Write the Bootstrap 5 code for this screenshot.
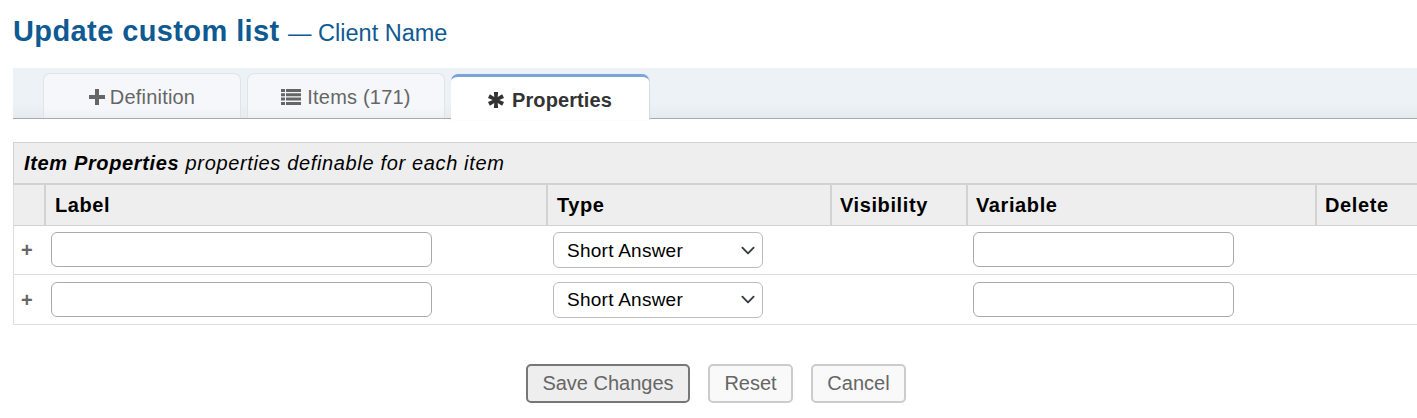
<!DOCTYPE html>
<html lang="en">
<head>
    <meta charset="UTF-8">
    <meta name="viewport" content="width=device-width, initial-scale=1.0">
    <title>Update custom list</title>
    <link href="https://cdn.jsdelivr.net/npm/bootstrap@5.3.0/dist/css/bootstrap.min.css" rel="stylesheet">
    <style>
        body {
            font-family: "Liberation Sans", Arial, sans-serif;
            background: #fff;
            overflow: hidden;
        }

        .page-wrap {
            padding: 13px 0 0 13px;
        }

        .page-title {
            font-family: "Liberation Sans", Arial, sans-serif;
            font-size: 29px;
            font-weight: 700;
            line-height: 36px;
            letter-spacing: .4px;
            color: #0f5a92;
            margin: 0 0 17px;
        }

        .page-title span {
            font-size: 23.5px;
            font-weight: 400;
            letter-spacing: 0;
        }

        .tab-bar {
            height: 51px;
            padding: 5px 0 0 30px;
            gap: 6px;
            background: linear-gradient(#edf2f7, #edf2f7 70%, #e6ebf0);
            border-bottom: 1px solid #a9a9a9;
        }

        .tab-item {
            width: 198px;
            height: 45px;
            gap: 5px;
            padding-top: 2px;
            font-size: 20px;
            letter-spacing: .2px;
            color: #666;
            background: linear-gradient(#f5f7fa, #f5f7fa 75%, #eef1f4);
            border: 1px solid #e0e4e8;
            border-bottom: 0;
            border-radius: 7px 7px 0 0;
        }

        .tab-item svg {
            fill: #666;
        }

        .tab-list {
            gap: 6px;
        }

        .tab-active {
            height: 46px;
            margin-top: 1px;
            gap: 8px;
            padding-top: 3px;
            font-weight: 700;
            letter-spacing: .1px;
            color: #333;
            background: #fff;
            border: 0;
            border-top: 3px solid #7ba4d8;
            box-shadow: 1px 0 1px #d5dae0;
            margin-bottom: -1px;
        }

        .tab-active svg {
            fill: #333;
        }

        .props-table {
            width: 100%;
            margin-top: 23px;
            table-layout: fixed;
            border-collapse: separate;
            border-spacing: 0;
            border-left: 1px solid #ddd;
            color: #000;
        }

        .props-table caption {
            caption-side: top;
            height: 43px;
            padding: 0 0 0 10px;
            font-size: 20px;
            line-height: 40px;
            font-style: italic;
            letter-spacing: .65px;
            color: #000;
            background: #eee;
            border: solid #d2d2d2;
            border-width: 1px 0 2px 1px;
        }

        .props-table th {
            height: 41px;
            padding: 0 0 0 9px;
            font-size: 20px;
            letter-spacing: .6px;
            background: #eee;
            border-left: 2px solid #d2d2d2;
            border-bottom: 1px solid #d2d2d2;
        }

        .props-table th:first-child {
            border-left: 0;
        }

        .props-table th:nth-child(n+4) {
            padding-left: 8px;
        }

        .props-table td {
            height: 50px;
            padding: 0 0 0 7px;
            vertical-align: middle;
            border-bottom: 1px solid #ddd;
        }

        .props-table tbody tr:first-child td {
            height: 49px;
        }

        .props-table tbody tr:first-child .field-input {
            margin-bottom: 2px;
        }

        .props-table td:first-child {
            font-size: 20px;
            font-weight: 700;
            color: #666;
        }

        .field-input {
            display: block;
            height: 35px;
            background: #fff;
            border: 1px solid #aaa;
            border-radius: 6px;
        }

        .field-label {
            width: 381px;
        }

        .field-var {
            width: 261px;
        }

        .field-select {
            width: 210px;
            height: 36px;
            padding: 2px 0 0 13px;
            font-family: "Liberation Sans", Arial, sans-serif;
            font-size: 19px;
            letter-spacing: .25px;
            color: #000;
            background-position: right 4px center;
            background-size: 20px 15px;
            border: 1px solid #bbb;
            border-radius: 6px;
        }

        .form-actions {
            margin: 39px 0 0 2px;
            gap: 18px;
        }

        .act-btn {
            height: 39px;
            padding: 0 0 2px;
            font-size: 20px;
            line-height: 1;
            color: #666;
            background: #f9f9f9;
            border: 2px solid #ccc;
            border-radius: 5px;
        }

        .act-save {
            width: 164px;
            background: #eee;
            border-color: #777;
        }

        .act-reset {
            width: 85px;
        }

        .act-cancel {
            width: 95px;
        }
    </style>
</head>
<body>
    <div class="page-wrap">
        <h1 class="page-title">Update custom list <span>— Client Name</span></h1>

        <div class="tab-bar d-flex align-items-start">
            <div class="tab-item d-flex align-items-center justify-content-center">
                <svg width="16" height="16" viewBox="0 0 16 16"><path d="M6 0h4v6h6v4h-6v6H6v-6H0V6h6z"/></svg>
                <span>Definition</span>
            </div>
            <div class="tab-item tab-list d-flex align-items-center justify-content-center">
                <svg width="20" height="16" viewBox="0 0 20 16"><path d="M0 0h4v3H0zM5 0h15v3H5zM0 4.300h4v3H0zM5 4.300h15v3H5zM0 8.600h4v3H0zM5 8.600h15v3H5zM0 13h4v3H0zM5 13h15v3H5z"/></svg>
                <span>Items (171)</span>
            </div>
            <div class="tab-item tab-active d-flex align-items-center justify-content-center">
                <svg width="16" height="16" viewBox="0 0 15 15"><path d="M5.500 0h4l-.4 4.700 4.200-2.500L15 5.700l-4.400 1.800L15 9.300l-1.700 3.500L9.100 10.300l.4 4.700h-4l.4-4.700-4.200 2.500L0 9.300l4.400-1.800L0 5.700l1.700-3.500L5.900 4.700z"/></svg>
                <span>Properties</span>
            </div>
        </div>

        <table class="props-table">
            <caption><b>Item Properties</b> properties definable for each item</caption>
            <colgroup>
                <col style="width:30px">
                <col style="width:502px">
                <col style="width:284px">
                <col style="width:136px">
                <col style="width:349px">
                <col>
            </colgroup>
            <thead>
                <tr>
                    <th></th>
                    <th>Label</th>
                    <th>Type</th>
                    <th>Visibility</th>
                    <th>Variable</th>
                    <th>Delete</th>
                </tr>
            </thead>
            <tbody>
                <tr>
                    <td>+</td>
                    <td><div class="field-input field-label"></div></td>
                    <td><select class="form-select field-select"><option>Short Answer</option></select></td>
                    <td></td>
                    <td><div class="field-input field-var"></div></td>
                    <td></td>
                </tr>
                <tr>
                    <td>+</td>
                    <td><div class="field-input field-label"></div></td>
                    <td><select class="form-select field-select"><option>Short Answer</option></select></td>
                    <td></td>
                    <td><div class="field-input field-var"></div></td>
                    <td></td>
                </tr>
            </tbody>
        </table>

        <div class="form-actions d-flex justify-content-center">
            <button type="button" class="btn act-btn act-save">Save Changes</button>
            <button type="button" class="btn act-btn act-reset">Reset</button>
            <button type="button" class="btn act-btn act-cancel">Cancel</button>
        </div>
    </div>

    <script src="https://cdn.jsdelivr.net/npm/bootstrap@5.3.0/dist/js/bootstrap.bundle.min.js"></script>
</body>
</html>
